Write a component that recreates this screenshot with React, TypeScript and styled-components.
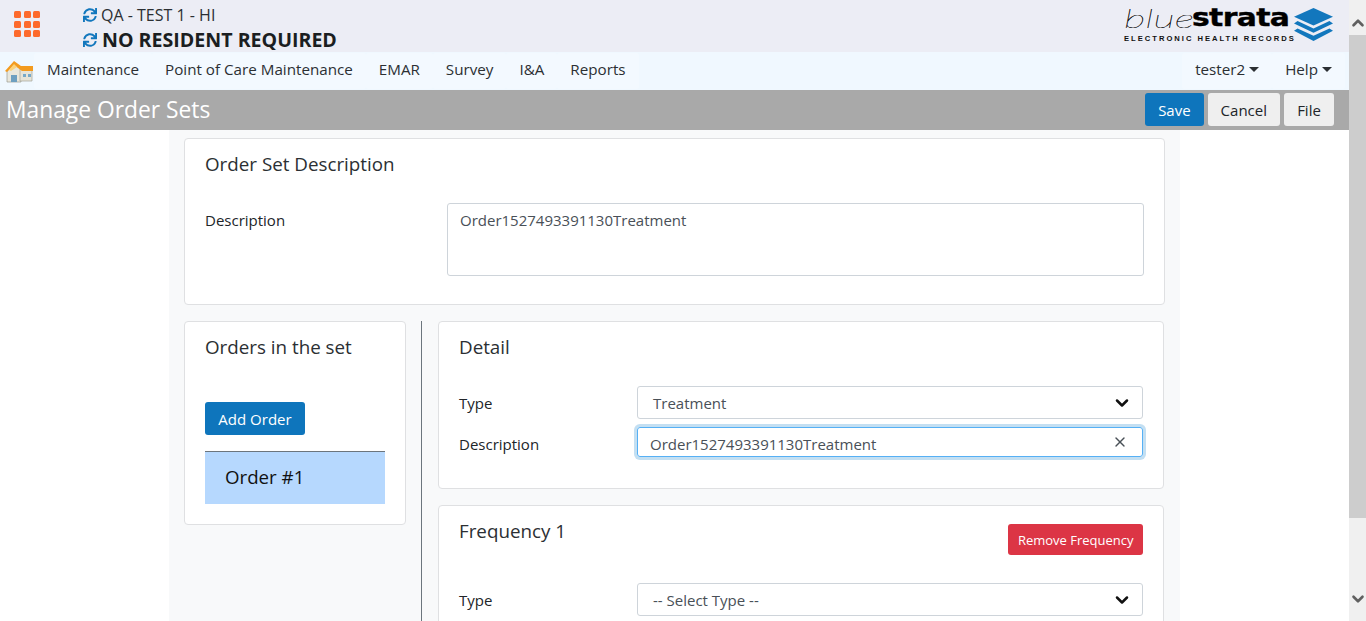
import React from 'react';
import styled, { createGlobalStyle } from 'styled-components';
import { ChevronDown, ChevronUp, X } from 'lucide-react';
import { FaSync } from 'react-icons/fa';

const GlobalStyle = createGlobalStyle`
  html, body {
    margin: 0;
    height: 100%;
    overflow: hidden;
  }

  body {
    font-family: 'Open Sans', 'Noto Sans', sans-serif;
    font-size: 15px;
    color: #212529;
    background: #fff;
  }

  * {
    box-sizing: border-box;
  }
`;

const Shell = styled.div`
  display: flex;
  height: 621px;
  width: 1366px;
  overflow: hidden;
`;

const Page = styled.div`
  flex: 0 0 1349px;
  height: 621px;
  overflow: hidden;
`;

const Scrollbar = styled.div`
  flex: 0 0 17px;
  display: flex;
  flex-direction: column;
  align-items: center;
  padding: 14px 0 13px;
  background: #f0f0f0;
  color: #606060;
`;

const ScrollArrow = styled.div`
  flex: 0 0 17px;
  display: flex;
  align-items: center;
  justify-content: center;
`;

const ScrollThumb = styled.div`
  flex: 0 0 483px;
  width: 100%;
  margin-top: 3px;
  background: #cdcdcd;
`;

const ScrollTrack = styled.div`
  flex: 1;
`;

const Header = styled.header`
  display: flex;
  align-items: flex-start;
  height: 52px;
  background: #ecedf5;
`;

const AppGrid = styled.div`
  display: grid;
  grid-template-columns: repeat(3, 7px);
  grid-auto-rows: 7px;
  gap: 2.5px;
  margin: 11px 0 0 14px;
`;

const AppDot = styled.span`
  background: #fd6a2c;
  border-radius: 1.5px;
`;

const Context = styled.div`
  margin: 3px 0 0 43px;
  display: flex;
  flex-direction: column;
`;

const ContextRow = styled.div<{ $strong?: boolean }>`
  display: flex;
  align-items: center;
  gap: ${p => (p.$strong ? 5 : 4)}px;
  height: ${p => (p.$strong ? 27 : 23)}px;
  font-size: ${p => (p.$strong ? 19.6 : 16)}px;
  font-weight: ${p => (p.$strong ? 700 : 400)};
  color: ${p => (p.$strong ? '#1b1e21' : '#2b2f33')};
  white-space: nowrap;
  svg {
    flex: none;
    color: #1277bd;
  }
`;

const Logo = styled.div`
  margin: 6px 16px 0 auto;
  display: flex;
  align-items: flex-start;
  gap: 6px;
`;

const LogoWords = styled.div`
  display: flex;
  flex-direction: column;
  width: 164px;
`;

const LogoName = styled.div`
  display: flex;
  height: 28px;
  line-height: 24px;
  color: #000;
`;

const LogoThin = styled.span`
  flex: 0 0 68px;
  font-family: 'Lato', sans-serif;
  font-size: 26px;
  font-weight: 100;
  font-style: italic;
  transform: scaleX(1.62);
  transform-origin: left;
  -webkit-text-stroke: 0.2px #000;
`;

const LogoBold = styled.span`
  flex: 0 0 94px;
  font-family: 'DejaVu Sans', sans-serif;
  font-size: 24px;
  font-weight: 700;
  letter-spacing: -0.5px;
  transform: scaleX(1.24);
  transform-origin: left;
  -webkit-text-stroke: 0.4px #000;
`;

const LogoTag = styled.div`
  font-family: 'Liberation Sans', sans-serif;
  font-size: 7.6px;
  font-weight: 700;
  letter-spacing: 2px;
  line-height: 10px;
  color: #111;
  white-space: nowrap;
`;

const LogoMark = styled.svg`
  margin-top: 2px;
`;

const Nav = styled.nav`
  display: flex;
  align-items: center;
  height: 38px;
  background: #f0f8ff;
`;

const HomeIcon = styled.svg`
  flex: none;
  width: 28px;
  height: 22px;
  margin: 2px 1px 0 5px;
`;

const NavItem = styled.div`
  padding: 0 13px;
  height: 36px;
  line-height: 33px;
  font-size: 15.2px;
  color: #2b2f33;
  white-space: nowrap;
  background: #f3f9ff;
  border-radius: 3px;
`;

const NavRight = styled.div`
  margin-left: auto;
  margin-right: 4px;
  display: flex;
`;

const Caret = styled.span`
  display: inline-block;
  margin-left: 4px;
  vertical-align: 3px;
  border-top: 5px solid #2b2f33;
  border-left: 5px solid transparent;
  border-right: 5px solid transparent;
`;

const TitleBar = styled.div`
  display: flex;
  align-items: center;
  height: 40px;
  padding: 0 15px 0 6px;
  background: #a9a9a9;
`;

const Title = styled.h1`
  margin: -2px auto 0 0;
  font-size: 22.8px;
  font-weight: 400;
  color: #fff;
`;

const Button = styled.button<{ $tone: 'primary' | 'light'; $minWidth?: number }>`
  height: 33px;
  min-width: ${p => p.$minWidth ?? 0}px;
  padding: 0 13px;
  border: 0;
  border-radius: 3px;
  font: inherit;
  font-size: 15px;
  white-space: nowrap;
  color: ${p => (p.$tone === 'light' ? '#212529' : '#fff')};
  background: ${p => (p.$tone === 'light' ? '#efefef' : '#0e75bc')};
`;

const RemoveButton = styled.button`
  height: 31px;
  margin-top: 5px;
  padding: 0 9.5px;
  border: 0;
  border-radius: 3px;
  font: inherit;
  font-size: 13px;
  white-space: nowrap;
  color: #fff;
  background: #dc3545;
`;

const TitleActions = styled.div`
  display: flex;
  gap: 4px;
  margin-top: -1px;
`;

const Content = styled.main`
  width: 1011px;
  height: 491px;
  margin-left: 169px;
  padding: 8px 15px 0;
  background: #f8f9fa;
  overflow: hidden;
`;

const Card = styled.section`
  background: #fff;
  border: 1px solid #dfe0e2;
  border-radius: 4px;
`;

const DescriptionCard = styled(Card)`
  height: 167px;
  padding: 13px 20px 0;
`;

const CardTitle = styled.h2`
  margin: 0;
  font-size: 18.8px;
  line-height: 24px;
  font-weight: 400;
  color: #2b2f33;
`;

const DescriptionRow = styled.div`
  display: flex;
  margin-top: 27px;
`;

const DescriptionLabel = styled.label`
  flex: 0 0 242px;
  padding-top: 7px;
  font-size: 15px;
  line-height: 20px;
`;

const TextArea = styled.div`
  flex: 0 0 697px;
  height: 73px;
  padding: 6px 12px;
  border: 1px solid #ced4da;
  border-radius: 3px;
  font-size: 15px;
  line-height: 20px;
  color: #495057;
`;

const Columns = styled.div`
  display: flex;
  margin-top: 16px;
`;

const OrdersCard = styled(Card)`
  flex: 0 0 222px;
  height: 204px;
  padding: 13px 20px 0;
`;

const AddRow = styled.div`
  margin-top: 43px;
`;

const OrderEntry = styled.div`
  margin-top: 16px;
  height: 53px;
  padding-left: 20px;
  line-height: 49px;
  font-size: 18.7px;
  color: #111;
  background: #b6d8fe;
  border-top: 1px solid #6c757d;
`;

const DetailColumn = styled.div`
  margin: 0 1px 0 15px;
  padding-left: 16px;
  border-left: 1px solid #6c757d;
  flex: 1;
  display: flex;
  flex-direction: column;
  gap: 16px;
`;

const DetailCard = styled(Card)`
  height: 168px;
  padding: 13px 20px 0;
`;

const FrequencyCard = styled(Card)`
  height: 200px;
  padding: 13px 20px 0;
`;

const FrequencyHead = styled.div`
  display: flex;
  align-items: flex-start;
  justify-content: space-between;
`;

const FieldRow = styled.div<{ $gap: number }>`
  display: flex;
  align-items: center;
  margin-top: ${p => p.$gap}px;
`;

const FieldLabel = styled.label<{ $drop: number }>`
  flex: 0 0 178px;
  padding-top: ${p => p.$drop}px;
  font-size: 15px;
`;

const Select = styled.div`
  flex: 0 0 506px;
  display: flex;
  align-items: center;
  justify-content: space-between;
  height: 33px;
  padding: 0 10px 0 15px;
  border: 1px solid #ced4da;
  border-radius: 3px;
  font-size: 15px;
  color: #495057;
  svg {
    color: #111;
  }
`;

const ActiveInput = styled.div`
  flex: 0 0 506px;
  display: flex;
  align-items: center;
  justify-content: space-between;
  height: 30px;
  padding: 3px 14px 0 12px;
  border: 1px solid #56b0f5;
  border-radius: 3px;
  box-shadow: 0 0 0 3px #c3dff2;
  font-size: 15px;
  color: #495057;
  svg {
    margin-top: -3px;
  }
`;

const navItems = ['Maintenance', 'Point of Care Maintenance', 'EMAR', 'Survey', 'I&A', 'Reports'];

const App: React.FC = () => (
  <Shell>
    <GlobalStyle />
    <Page>
      <Header>
        <AppGrid>
          {Array.from({ length: 9 }).map((_, i) => (
            <AppDot key={i} />
          ))}
        </AppGrid>
        <Context>
          <ContextRow>
            <FaSync size={14} />
            QA - TEST 1 - HI
          </ContextRow>
          <ContextRow $strong>
            <FaSync size={14} />
            NO RESIDENT REQUIRED
          </ContextRow>
        </Context>
        <Logo>
          <LogoWords>
            <LogoName>
              <LogoThin>blue</LogoThin>
              <LogoBold>strata</LogoBold>
            </LogoName>
            <LogoTag>ELECTRONIC HEALTH RECORDS</LogoTag>
          </LogoWords>
          <LogoMark width="39" height="33" viewBox="0 0 44 34" preserveAspectRatio="none">
            <path d="M22 0 L44 9 L22 18 L0 9 Z" fill="#1277bd" />
            <path d="M4 13.5 L22 21 L40 13.5 L44 16 L22 25.5 L0 16 Z" fill="#1277bd" />
            <path d="M4 21 L22 28.5 L40 21 L44 23.5 L22 34 L0 23.5 Z" fill="#1277bd" />
          </LogoMark>
        </Logo>
      </Header>
      <Nav>
        <HomeIcon viewBox="0 0 28 22">
          <path d="M2 10 L9 1 L16 8 L16 21 L2 21 Z" fill="#e9e7dc" stroke="#9b9b90" strokeWidth="0.7" />
          <path d="M15 8 L27 8 L27 20 L15 20 Z" fill="#e6e4d8" stroke="#a5a59a" strokeWidth="0.7" />
          <path d="M0 10 L9 0 L16 5 L28 5 L28 10 L17 10 L9 4 L2 11 Z" fill="#f39b1f" />
          <path d="M4 9 L9 3 L12 6 L6 10 Z" fill="#fbd27a" />
          <rect x="6" y="14" width="6" height="7" fill="#6d9fc0" />
          <rect x="18" y="13" width="3" height="3" fill="#77a9c8" />
          <rect x="23" y="13" width="3" height="3" fill="#77a9c8" />
        </HomeIcon>
        {navItems.map(item => (
          <NavItem key={item}>{item}</NavItem>
        ))}
        <NavRight>
          <NavItem>
            tester2
            <Caret />
          </NavItem>
          <NavItem>
            Help
            <Caret />
          </NavItem>
        </NavRight>
      </Nav>
      <TitleBar>
        <Title>Manage Order Sets</Title>
        <TitleActions>
          <Button $tone="primary">Save</Button>
          <Button $tone="light">Cancel</Button>
          <Button $tone="light" $minWidth={50}>File</Button>
        </TitleActions>
      </TitleBar>
      <Content>
        <DescriptionCard>
          <CardTitle>Order Set Description</CardTitle>
          <DescriptionRow>
            <DescriptionLabel>Description</DescriptionLabel>
            <TextArea>Order1527493391130Treatment</TextArea>
          </DescriptionRow>
        </DescriptionCard>
        <Columns>
          <OrdersCard>
            <CardTitle>Orders in the set</CardTitle>
            <AddRow>
              <Button $tone="primary" $minWidth={100}>Add Order</Button>
            </AddRow>
            <OrderEntry>Order #1</OrderEntry>
          </OrdersCard>
          <DetailColumn>
            <DetailCard>
              <CardTitle>Detail</CardTitle>
              <FieldRow $gap={27}>
                <FieldLabel $drop={0}>Type</FieldLabel>
                <Select>
                  Treatment
                  <ChevronDown size={20} strokeWidth={3} />
                </Select>
              </FieldRow>
              <FieldRow $gap={8}>
                <FieldLabel $drop={3}>Description</FieldLabel>
                <ActiveInput>
                  Order1527493391130Treatment
                  <X size={16} strokeWidth={2} />
                </ActiveInput>
              </FieldRow>
            </DetailCard>
            <FrequencyCard>
              <FrequencyHead>
                <CardTitle>Frequency 1</CardTitle>
                <RemoveButton>Remove Frequency</RemoveButton>
              </FrequencyHead>
              <FieldRow $gap={28}>
                <FieldLabel $drop={0}>Type</FieldLabel>
                <Select>
                  -- Select Type --
                  <ChevronDown size={20} strokeWidth={3} />
                </Select>
              </FieldRow>
            </FrequencyCard>
          </DetailColumn>
        </Columns>
      </Content>
    </Page>
    <Scrollbar>
      <ScrollArrow>
        <ChevronUp size={18} strokeWidth={3.5} />
      </ScrollArrow>
      <ScrollThumb />
      <ScrollTrack />
      <ScrollArrow>
        <ChevronDown size={18} strokeWidth={3.5} />
      </ScrollArrow>
    </Scrollbar>
  </Shell>
);

export default App;
